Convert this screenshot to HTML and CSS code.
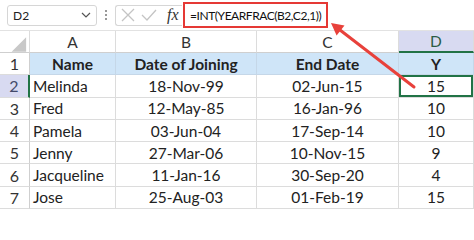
FILE: index.html
```html
<!DOCTYPE html>
<html>
<head>
<meta charset="utf-8">
<link rel="stylesheet" href="styles.css">
</head>
<body>
<div class="app">
  <div class="fbar">
    <div class="namebox">
      <span class="ref">D2</span>
      <svg class="chev" width="10" height="6" viewBox="0 0 10 6"><path d="M1 1 L5 5 L9 1" fill="none" stroke="#555" stroke-width="1.2"/></svg>
    </div>
    <div class="dots"><i></i><i></i><i></i></div>
    <div class="fxgroup">
      <svg class="ico" width="14" height="14" viewBox="0 0 14 14"><path d="M1 1 L13 13 M13 1 L1 13" stroke="#c4c4c4" stroke-width="1.3" fill="none"/></svg>
      <svg class="ico" width="16" height="14" viewBox="0 0 16 14"><path d="M1 7 L6 12 L15 2" stroke="#c4c4c4" stroke-width="1.3" fill="none"/></svg>
      <span class="fx">fx</span>
    </div>
    <div class="formula">=INT(YEARFRAC(B2,C2,1))</div>
  </div>
  <div class="sheet">
    <div class="corner"><svg width="30" height="22" viewBox="0 0 30 22"><path d="M12 21 L27 6 L27 21 Z" fill="#c8c8c8"/></svg></div>
    <div class="ch">A</div>
    <div class="ch">B</div>
    <div class="ch">C</div>
    <div class="ch sel">D</div>

    <div class="rh">1</div>
    <div class="c hd">Name</div>
    <div class="c hd">Date of Joining</div>
    <div class="c hd">End Date</div>
    <div class="c hd">Y</div>

    <div class="rh sel">2</div>
    <div class="c l">Melinda</div>
    <div class="c">18-Nov-99</div>
    <div class="c">02-Jun-15</div>
    <div class="c active">15</div>

    <div class="rh">3</div>
    <div class="c l">Fred</div>
    <div class="c">12-May-85</div>
    <div class="c">16-Jan-96</div>
    <div class="c">10</div>

    <div class="rh">4</div>
    <div class="c l">Pamela</div>
    <div class="c">03-Jun-04</div>
    <div class="c">17-Sep-14</div>
    <div class="c">10</div>

    <div class="rh">5</div>
    <div class="c l">Jenny</div>
    <div class="c">27-Mar-06</div>
    <div class="c">10-Nov-15</div>
    <div class="c">9</div>

    <div class="rh">6</div>
    <div class="c l">Jacqueline</div>
    <div class="c">11-Jan-16</div>
    <div class="c">30-Sep-20</div>
    <div class="c">4</div>

    <div class="rh">7</div>
    <div class="c l">Jose</div>
    <div class="c">25-Aug-03</div>
    <div class="c">01-Feb-19</div>
    <div class="c">15</div>
  </div>
  <svg class="arrow" width="474" height="209" viewBox="0 0 474 209">
    <line x1="414" y1="87" x2="340" y2="30" stroke="#e8413b" stroke-width="3" stroke-linecap="round"/>
    <path d="M331 23 L344.5 25.6 L336.6 35.6 Z" fill="#e8413b"/>
  </svg>
</div>
</body>
</html>
```
FILE: styles.css
```css
* { box-sizing: border-box; }
html, body { margin: 0; padding: 0; background: #fff; }
body { width: 474px; height: 209px; overflow: hidden; font-family: "Lato", "Liberation Sans", sans-serif; color: #222; }
.app { position: relative; width: 474px; height: 209px; }

.fbar { height: 31px; display: flex; align-items: center; border-bottom: 1px solid #e2e2e2; }
.namebox { margin-left: 7px; width: 90px; height: 21px; border: 1px solid #d6d6d6; border-radius: 3px; display: flex; align-items: center; justify-content: space-between; padding: 0 5px 0 5px; }
.ref { font-size: 12px; color: #222; }
.dots { width: 18px; display: flex; flex-direction: column; align-items: center; gap: 2px; }
.dots i { display: block; width: 2px; height: 2px; background: #777; border-radius: 1px; }
.fxgroup { width: 67px; height: 21px; border: 1px solid #d6d6d6; border-right: none; border-radius: 3px 0 0 3px; display: flex; align-items: center; padding-left: 5px; gap: 6px; }
.fx { font-family: "Liberation Serif", serif; font-style: italic; font-size: 16px; color: #333; margin-left: 4px; }
.formula { margin-left: 1px; width: 145px; height: 26px; border: 2px solid #e53935; display: flex; align-items: center; padding-left: 5px; font-size: 12px; letter-spacing: -0.45px; color: #111; white-space: nowrap; }

.sheet { display: grid; grid-template-columns: 30px 86px 141px 142px 75px; grid-template-rows: 22px repeat(7, 22.3px); }
.sheet > div { border-right: 1px solid #dcdcdc; border-bottom: 1px solid #dcdcdc; display: flex; align-items: center; justify-content: center; font-size: 15.5px; white-space: nowrap; }
.corner { background: #fff; align-items: stretch !important; justify-content: stretch !important; border-bottom-color: #cfcfcf !important; }
.ch { color: #333; background: #fff; border-bottom-color: #cfcfcf !important; }
.ch.sel { background: #d8daf1; color: #2b5c45; border-bottom: 2px solid #217346 !important; }
.rh { color: #333; background: #fff; border-right-color: #cfcfcf !important; font-size: 16px !important; }
.rh.sel { background: #d8daf1; color: #444a6a; border-right: 2px solid #217346 !important; }
.c { background: #fff; }
.c.l { justify-content: flex-start !important; padding-left: 3px; }
.c.hd { background: #cfe5f8; font-weight: bold; border-right-color: #c5d7e8 !important; border-bottom-color: #c5d7e8 !important; }
.c.active { box-shadow: inset 0 0 0 2px #217346; }

.arrow { position: absolute; left: 0; top: 0; pointer-events: none; }
```
